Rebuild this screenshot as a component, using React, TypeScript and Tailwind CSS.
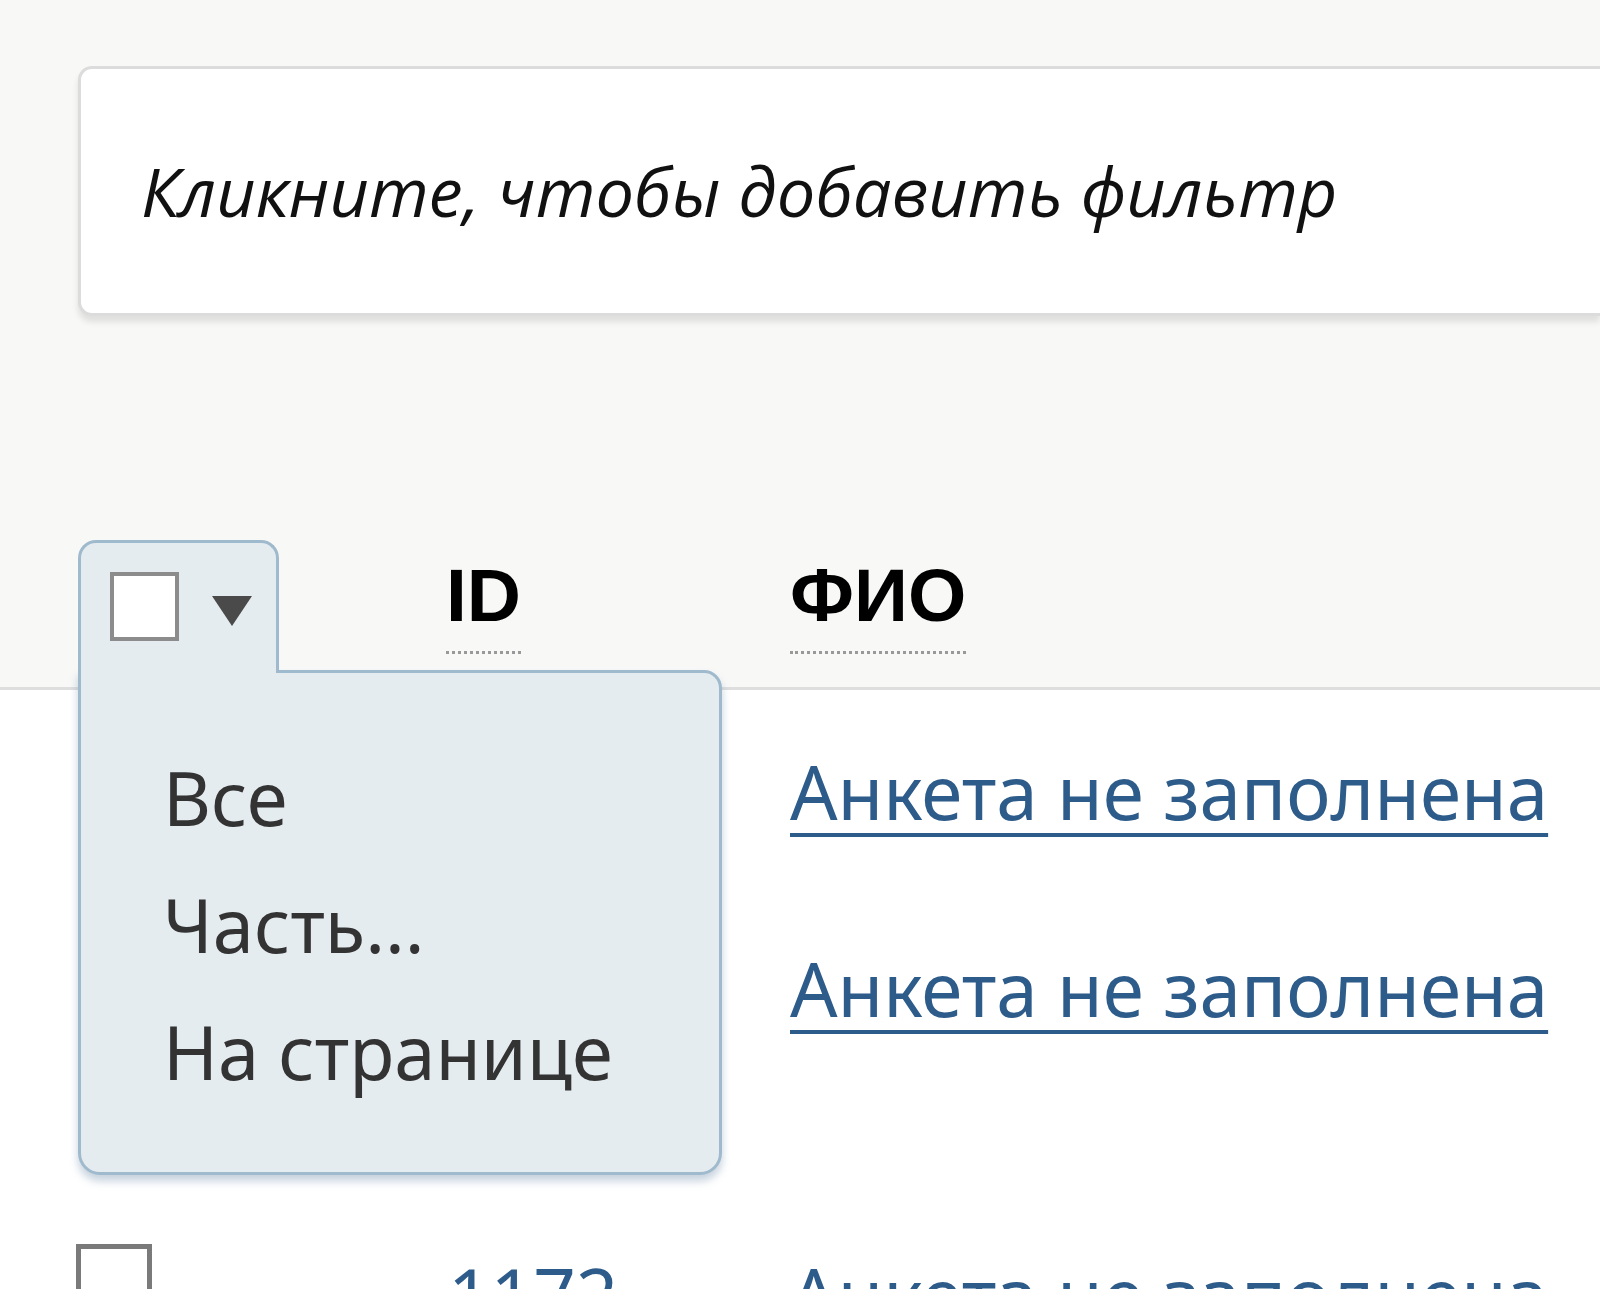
import React from "react";

// Header checkbox with the selection menu open below it
const SelectMenu: React.FC = () => {
  return (
    <div className="absolute left-[78px] top-[540px] w-[644px]">
      {/* Tab around the checkbox */}
      <div className="relative z-10 flex h-[133px] w-[201px] items-start gap-[33px] rounded-t-[18px] border-[3px] border-b-0 border-[#a0bacd] bg-[#e5ecf0] pl-[29px] pt-[29px]">
        <span className="block h-[69px] w-[69px] border-[4px] border-[#8c8c8c] bg-white" />
        <svg width="40" height="30" viewBox="0 0 40 30" className="mt-[24px]">
          <path d="M0 0 H40 L20 30 Z" fill="#4a4a4a" />
        </svg>
      </div>
      {/* Menu body */}
      <div className="-mt-[3px] flex h-[505px] flex-col rounded-b-[22px] rounded-tr-[18px] border-[3px] border-[#a0bacd] bg-[#e5ecf0] pl-[82px] pt-[75px] shadow-[0_6px_8px_rgba(110,140,170,0.4)]">
        {["Все", "Часть...", "На странице"].map((item) => (
          <div
            key={item}
            className="h-[127px] font-['Noto_Sans',sans-serif] text-[74px] leading-[100px] text-[#333]"
          >
            {item}
          </div>
        ))}
      </div>
    </div>
  );
};

const RowLink: React.FC<{ text: string }> = ({ text }) => (
  <a
    href="#"
    className="font-['Noto_Sans',sans-serif] text-[74.5px] leading-[100px] text-[#2d5b8a] underline decoration-[4px] underline-offset-[13px]"
  >
    {text}
  </a>
);

export default function App() {
  return (
    <div className="relative h-[1289px] w-full overflow-hidden bg-white">
      {/* Filter area */}
      <div className="bg-[#f8f8f7] pt-[66px]">
        <div className="ml-[78px] flex h-[250px] items-center rounded-l-[14px] border-[3px] border-r-0 border-[#dcdcdc] bg-white pl-[60px] shadow-[0_6px_6px_rgba(0,0,0,0.1)]">
          <span className="font-['Open_Sans',sans-serif] text-[68.5px] italic text-[#111]">
            Кликните, чтобы добавить фильтр
          </span>
        </div>
        {/* Table header */}
        <div className="mt-[222px] flex h-[152px] items-start border-b-[3px] border-[#dedede] pt-[12px]">
          <div className="w-[446px]" />
          <div className="w-[344px]">
            <span className="border-b-[3px] border-dotted border-[#999] pb-[14px] font-['Liberation_Sans',sans-serif] text-[75px] font-bold leading-[90px] text-black">
              ID
            </span>
          </div>
          <div>
            <span className="border-b-[3px] border-dotted border-[#999] pb-[14px] font-['Liberation_Sans',sans-serif] text-[75px] font-bold leading-[90px] text-black">
              ФИО
            </span>
          </div>
        </div>
      </div>

      {/* Table rows */}
      <div className="flex flex-col">
        <div className="flex h-[197px] items-start pl-[790px] pt-[51px]">
          <RowLink text="Анкета не заполнена" />
        </div>
        <div className="flex h-[357px] items-start pl-[790px] pt-[51px]">
          <RowLink text="Анкета не заполнена" />
        </div>
        <div className="flex items-start">
          <span className="ml-[76px] block h-[76px] w-[76px] border-[5px] border-[#7a7a7a] bg-white" />
          <span className="w-[296px]" />
          <span className="w-[342px] font-['Noto_Sans',sans-serif] text-[74.5px] leading-[100px] text-[#2d5b8a]">
            1172
          </span>
          <RowLink text="Анкета не заполнена" />
        </div>
      </div>

      <SelectMenu />
    </div>
  );
}
